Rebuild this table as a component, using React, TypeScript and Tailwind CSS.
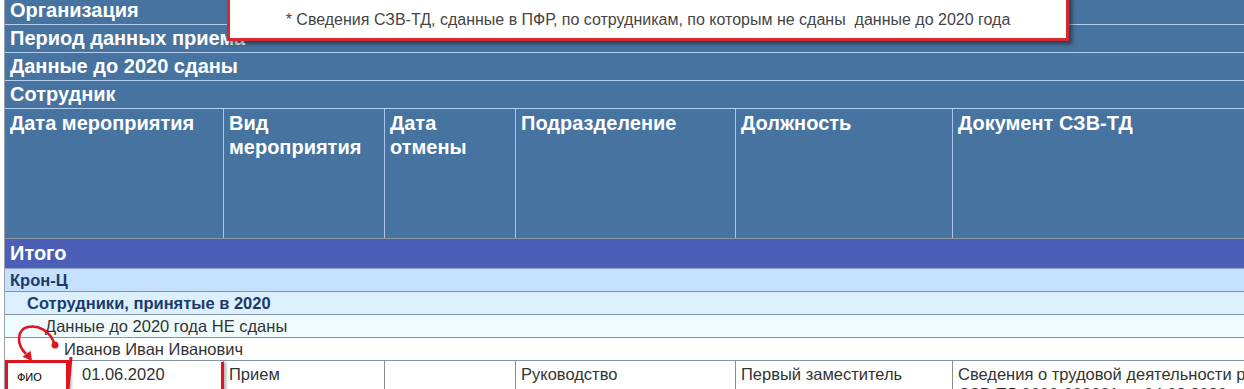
import React from "react";

const cols = "grid grid-cols-[219px_161px_131px_220px_217px_1fr]";

function HeadRow({ label }: { label: string }) {
  return (
    <div className="h-[28px] bg-[#46739f] border-b border-[#b3cdee] pl-[5px] text-white font-bold text-[20px] leading-[27px] whitespace-nowrap">
      {label}
    </div>
  );
}

export default function App() {
  return (
    <div className="relative w-[1244px] h-[389px] overflow-hidden bg-white font-['Liberation_Sans',Arial,sans-serif]">
      <div className="-mt-[3px] ml-[4px] border-l border-[#9aa3ad]">
        <HeadRow label="Организация" />
        <HeadRow label="Период данных приема" />
        <HeadRow label="Данные до 2020 сданы" />
        <HeadRow label="Сотрудник" />

        {/* column headers */}
        <div className={`${cols} h-[130px] bg-[#46739f] border-b border-[#8c97a6] text-white font-bold text-[20px] leading-[24px]`}>
          <div className="border-r border-[#a9c6ee] pl-[5px] pt-[2px] whitespace-nowrap">Дата мероприятия</div>
          <div className="border-r border-[#a9c6ee] pl-[5px] pt-[2px]">Вид<br />мероприятия</div>
          <div className="border-r border-[#a9c6ee] pl-[5px] pt-[2px]">Дата<br />отмены</div>
          <div className="border-r border-[#a9c6ee] pl-[5px] pt-[2px]">Подразделение</div>
          <div className="border-r border-[#a9c6ee] pl-[5px] pt-[2px]">Должность</div>
          <div className="pl-[5px] pt-[2px] whitespace-nowrap">Документ СЗВ-ТД</div>
        </div>

        {/* groups */}
        <div className="h-[30px] bg-[#4a5fb5] border-b border-[#8ea3c8] pl-[5px] text-white font-bold text-[20px] leading-[29px]">Итого</div>
        <div className="h-[23px] bg-[#c6e1fb] border-b border-[#8293ac] pl-[5px] text-[#1c3b6b] font-bold text-[16.5px] leading-[22px]">Крон-Ц</div>
        <div className="h-[23px] bg-[#dbeffd] border-b border-[#8293ac] pl-[22px] text-[#1c3b6b] font-bold text-[16.5px] leading-[22px]">Сотрудники, принятые в 2020</div>
        <div className="h-[23px] bg-[#f0fbff] border-b border-[#8293ac] pl-[40px] text-[#333] text-[16.5px] leading-[22px]">Данные до 2020 года НЕ сданы</div>
        <div className="h-[23px] bg-white border-b border-[#8293ac] pl-[59px] text-[#333] text-[16.5px] leading-[22px]">Иванов Иван Иванович</div>

        {/* data row */}
        <div className={`${cols} text-[#333] text-[16.5px] leading-[20px]`}>
          <div className="border-r border-[#8c8c8c] pl-[77px] pt-[3px]">01.06.2020</div>
          <div className="border-r border-[#8c8c8c] pl-[5px] pt-[3px]">Прием</div>
          <div className="border-r border-[#8c8c8c] pl-[5px] pt-[3px]"></div>
          <div className="border-r border-[#8c8c8c] pl-[5px] pt-[3px]">Руководство</div>
          <div className="border-r border-[#8c8c8c] pl-[5px] pt-[3px] whitespace-nowrap">Первый заместитель<br />генерального директора</div>
          <div className="pl-[5px] pt-[3px] whitespace-nowrap">
            Сведения о трудовой деятельности работника<br />СЗВ-ТД 0000-000001 от 04.08.2020
          </div>
        </div>
      </div>

      {/* popup note */}
      <div className="absolute left-[227px] top-[-5px] w-[842px] h-[46px] border-[3px] border-[#d42a2f] bg-white shadow-[3px_3px_4px_rgba(0,0,0,0.45)] flex justify-center pt-[13px]">
        <span className="text-[16px] leading-[18px] text-[#454545] whitespace-pre">* Сведения СЗВ-ТД, сданные в ПФР, по сотрудникам, по которым не сданы  данные до 2020 года</span>
      </div>

      {/* ФИО marker */}
      <div className="absolute left-[5px] top-[360px] w-[64px] h-[40px] border-[3px] border-[#e0141e] bg-white shadow-[2px_2px_3px_rgba(0,0,0,0.35)] pl-[9px] pt-[7px] text-[11px] leading-[14px] text-black">
        ФИО
      </div>
      <div className="absolute left-[221px] top-[362px] w-[3px] h-[30px] bg-[#e0141e] shadow-[2px_0_3px_rgba(0,0,0,0.35)]"></div>

      <svg className="absolute left-0 top-[318px]" width="90" height="71" viewBox="0 0 90 71">
        <path d="M55 27 C50 12 38 7 28 9 C18 11 15 25 26 36" fill="none" stroke="#e0141e" strokeWidth="2.5" />
        <path d="M32 43 L30.6 32.8 L22.6 38.8 Z" fill="#e0141e" />
        <circle cx="55" cy="27" r="3.5" fill="#e0141e" />
        <path d="M71 39 L68 71" stroke="#e0141e" strokeWidth="3" />
      </svg>
    </div>
  );
}
